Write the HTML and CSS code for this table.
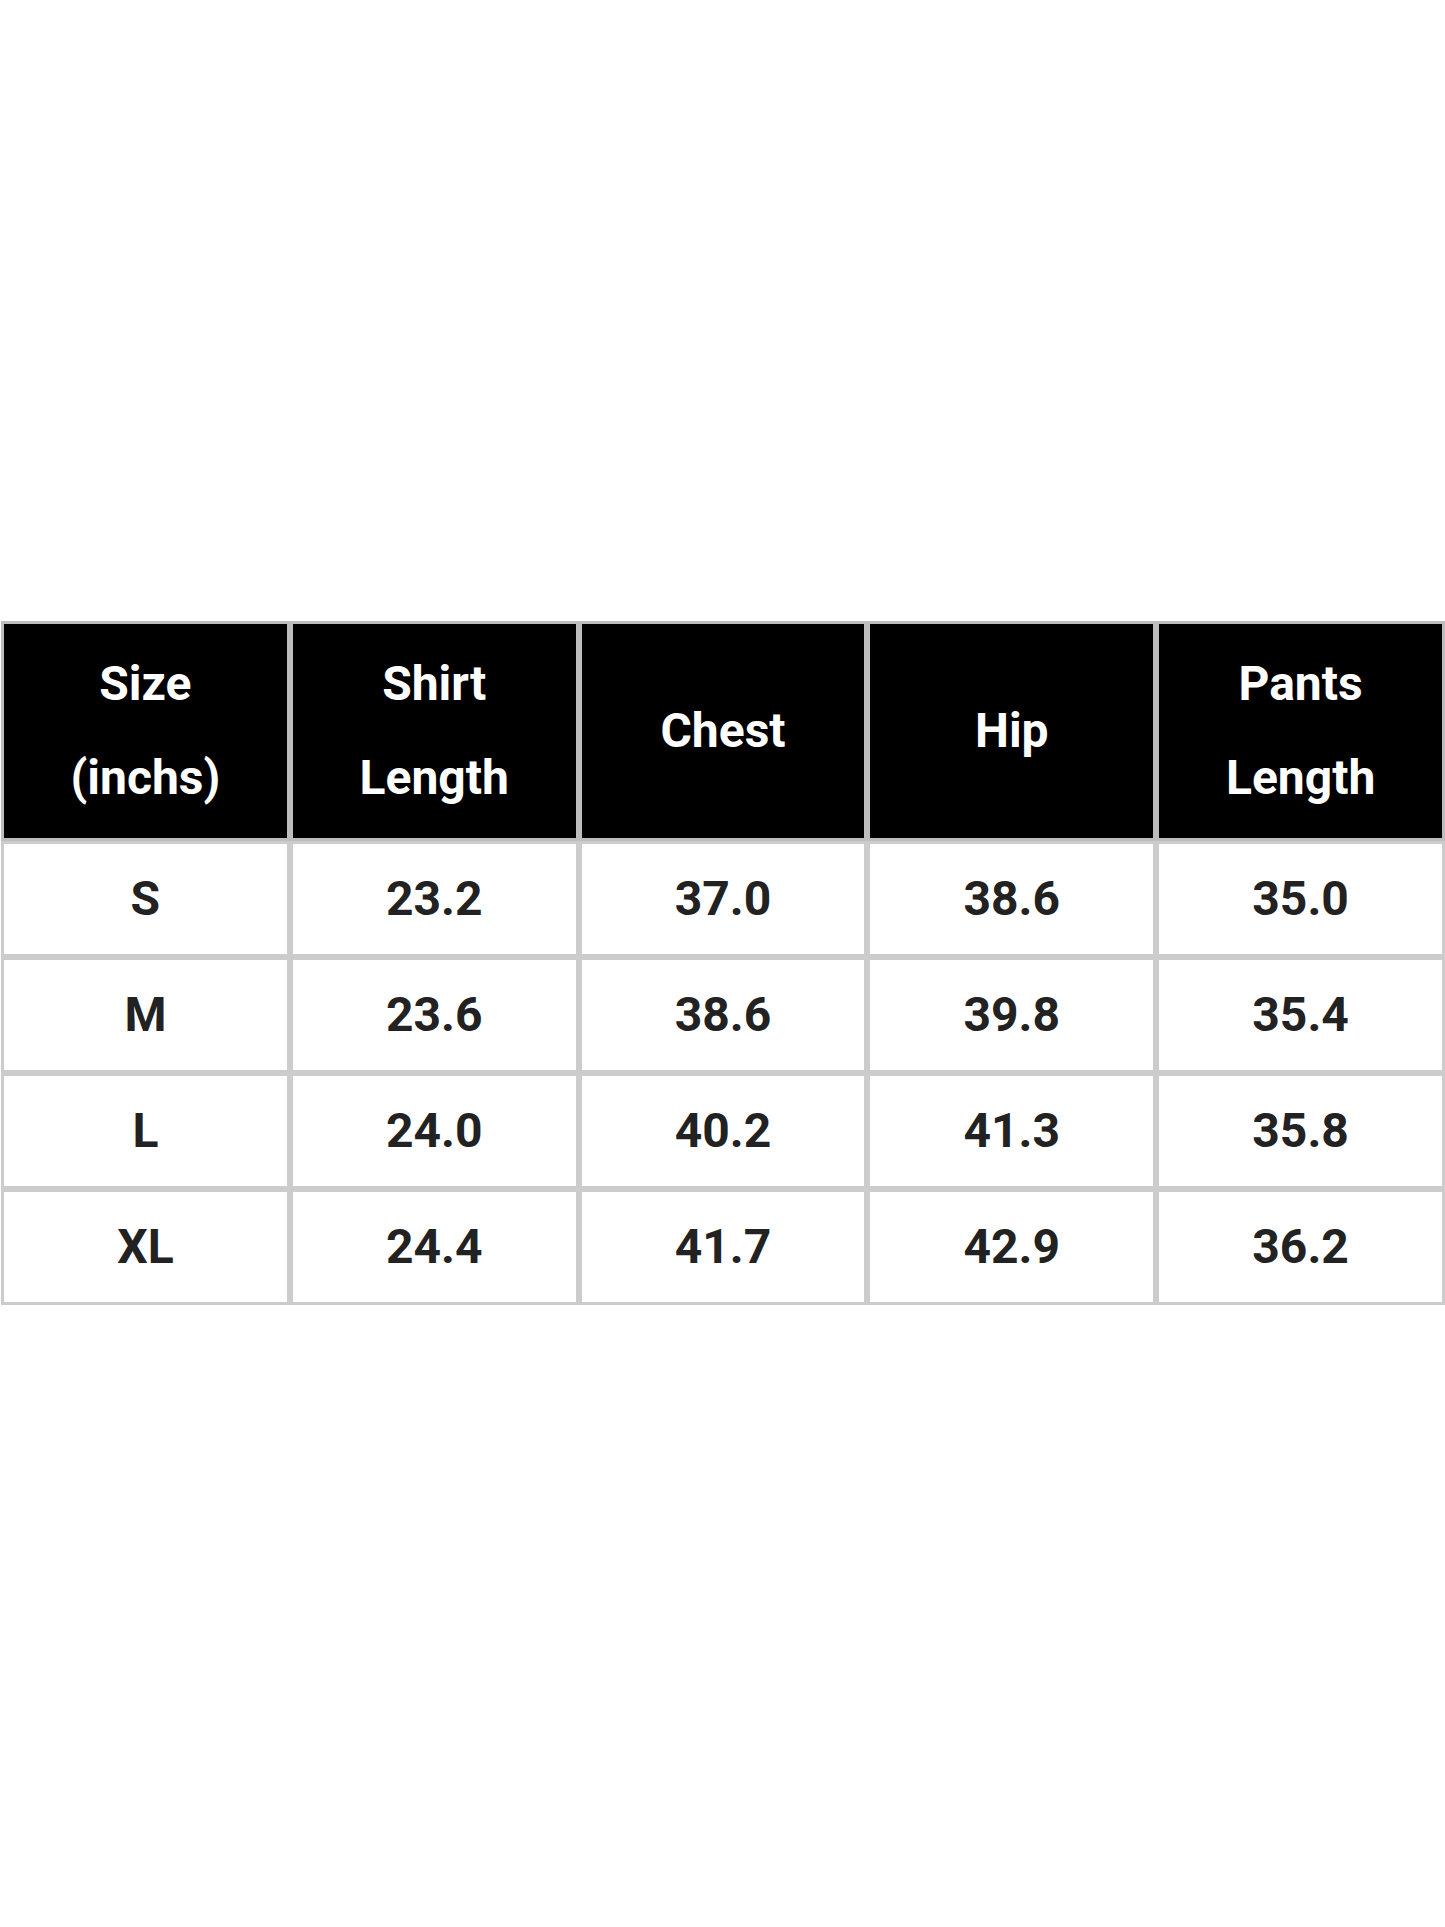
FILE: index.html
```html
<!DOCTYPE html>
<html>
<head>
<meta charset="utf-8">
<link rel="stylesheet" href="styles.css">
</head>
<body>
<div class="page">
  <table class="size-table">
    <thead>
      <tr>
        <th>Size<br>(inchs)</th>
        <th>Shirt<br>Length</th>
        <th>Chest</th>
        <th>Hip</th>
        <th>Pants<br>Length</th>
      </tr>
    </thead>
    <tbody>
      <tr><td>S</td><td>23.2</td><td>37.0</td><td>38.6</td><td>35.0</td></tr>
      <tr><td>M</td><td>23.6</td><td>38.6</td><td>39.8</td><td>35.4</td></tr>
      <tr><td>L</td><td>24.0</td><td>40.2</td><td>41.3</td><td>35.8</td></tr>
      <tr><td>XL</td><td>24.4</td><td>41.7</td><td>42.9</td><td>36.2</td></tr>
    </tbody>
  </table>
</div>
</body>
</html>
```
FILE: styles.css
```css
html, body {
  margin: 0;
  padding: 0;
  background: #ffffff;
}
.page {
  width: 1445px;
  height: 1927px;
  padding-top: 621px;
  box-sizing: border-box;
}
.size-table {
  width: 1444px;
  margin-left: 1px;
  border-collapse: separate;
  border-spacing: 0;
  table-layout: fixed;
  font-family: Roboto, "Liberation Sans", sans-serif;
  font-weight: 700;
}
.size-table th,
.size-table td {
  border: 3px solid #cccccc;
  text-align: center;
  vertical-align: middle;
  padding: 0;
}
.size-table th {
  background: #000000;
  color: #ffffff;
  font-size: 48px;
  line-height: 94px;
  height: 214px;
  border-color: #bdbdbd;
}
.size-table td {
  color: #222222;
  font-size: 48px;
  height: 110px;
  line-height: 56px;
}
```
